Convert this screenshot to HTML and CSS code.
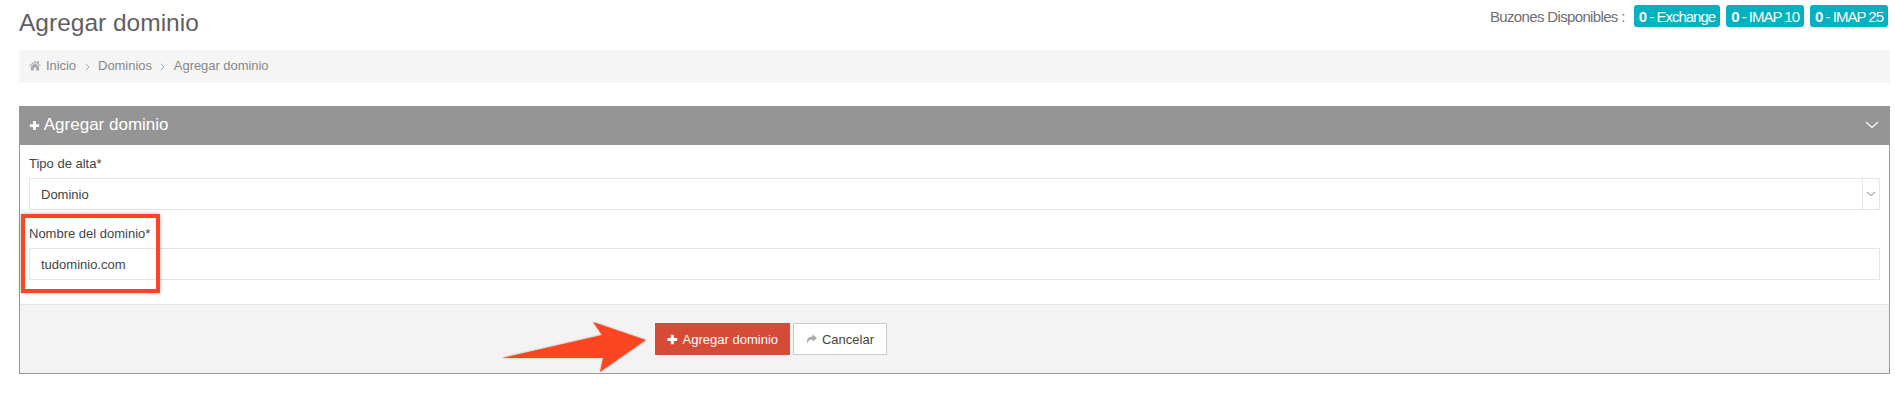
FILE: index.html
```html
<!DOCTYPE html>
<html lang="es">
<head>
<meta charset="utf-8">
<title>Agregar dominio</title>
<link rel="stylesheet" href="styles.css">
</head>
<body>
<div class="page">
  <header class="top">
    <h1 class="title">Agregar dominio</h1>
    <div class="quota">
      <span class="quota-label">Buzones Disponibles :</span>
      <span class="badge"><b>0</b> - Exchange</span>
      <span class="badge"><b>0</b> - IMAP 10</span>
      <span class="badge"><b>0</b> - IMAP 25</span>
    </div>
  </header>
  <nav class="crumbs">
    <svg class="home" viewBox="0 0 16 14" width="12" height="11"><path d="M8 0.500 0.300 7l.9 1L8 2.400 14.800 8l.9-1-2.700-2.300V1h-2v2L8 .5zM8 3.600 2.500 8.200V13.500h4v-3.600h3v3.600h4V8.200L8 3.600z" fill="#aaa"/></svg>
    <a>Inicio</a><svg class="sep" viewBox="0 0 5 8" width="5" height="8"><path d="M.7 .7 4 4 .7 7.300" fill="none" stroke="#aaa" stroke-width="1"/></svg><a>Dominios</a><svg class="sep" viewBox="0 0 5 8" width="5" height="8"><path d="M.7 .7 4 4 .7 7.300" fill="none" stroke="#aaa" stroke-width="1"/></svg><a>Agregar dominio</a>
  </nav>
  <section class="panel">
    <div class="panel-head">
      <h2 class="panel-title"><svg class="plus" viewBox="0 0 12 12" width="11" height="11"><path d="M4.500 1h3v3.500h3.500v3h-3.500v3.500h-3v-3.500h-3.500v-3h3.500z" fill="#fff"/></svg> Agregar dominio</h2>
      <svg class="collapse" viewBox="0 0 14 8" width="14" height="8"><path d="M1 1l6 5.500 6-5.500" fill="none" stroke="#f1f1f1" stroke-width="1.500"/></svg>
    </div>
    <div class="panel-body">
      <div class="field">
        <label class="label">Tipo de alta*</label>
        <div class="select">
          <span class="value">Dominio</span>
          <span class="select-arrow"><svg viewBox="0 0 10 6" width="10" height="6"><path d="M1 1l4 3.500 4-3.500" fill="none" stroke="#888" stroke-width="1"/></svg></span>
        </div>
      </div>
      <div class="field">
        <label class="label">Nombre del dominio*</label>
        <div class="input"><span class="value">tudominio.com</span></div>
      </div>
    </div>
    <div class="panel-foot">
      <button class="btn btn-red"><svg viewBox="0 0 12 12" width="11" height="11"><path d="M4.300 .5h3.400v3.800h3.800v3.400h-3.800v3.800h-3.400v-3.800h-3.800v-3.400h3.800z" fill="#fff"/></svg> Agregar dominio</button>
      <button class="btn btn-white"><svg viewBox="0 0 14 12" width="14" height="12"><path d="M8.500 0 14 4.700 8.500 9.500V6.700C4.800 6.700 3 7.800 2 12 .2 6.500 2.500 2.900 8.500 2.700z" fill="#aaa"/></svg> Cancelar</button>
    </div>
  </section>
</div>
<div class="mark-box"></div>
<svg class="mark-arrow" viewBox="0 0 160 60" width="160" height="60"><path d="M2 38 102 15 93 2 146 20 100 52 103 38z" fill="#fc4521"/></svg>
</body>
</html>
```
FILE: styles.css
```css
* { box-sizing: border-box; }
html, body { margin: 0; padding: 0; background: #fff; }
body { font-family: "Liberation Sans", Arial, sans-serif; color: #333; position: relative; height: 406px; overflow: hidden; }
.page { padding: 0 5px 0 19px; }
.top { display: flex; justify-content: space-between; align-items: flex-start; height: 50px; }
.title { margin: 7px 0 0; font-size: 24.5px; line-height: 31px; font-weight: 400; color: #5f5f5f; }
.quota { display: flex; align-items: center; margin-top: 5px; height: 22px; padding-right: 2px; }
.quota-label { font-size: 15px; letter-spacing: -.65px; color: #6f6f6f; margin-right: 3px; }
.badge { background: #00b1c1; color: #fff; font-size: 15px; letter-spacing: -1px; height: 22px; line-height: 23px; padding: 0 5px; border-radius: 3px; margin-left: 6px; white-space: nowrap; }
.badge:first-of-type { margin-left: 0; }
.crumbs { display: flex; align-items: center; height: 33px; padding-bottom: 2px; background: #f5f5f5; padding-left: 10px; font-size: 13px; letter-spacing: -.05px; color: #888; }
.crumbs a { color: #888; }
.home { margin-right: 5px; }
.sep { margin: 2px 8.500px 0; }
.panel { margin-top: 23px; border: solid #999; border-width: 0 1px 1px 1px; height: 268px; display: flex; flex-direction: column; }
.panel-head { display: flex; justify-content: space-between; align-items: center; height: 39px; margin: 0 -1px; background: #959595; padding: 0 11px 2px 10px; }
.panel-title { margin: 0; font-size: 17px; font-weight: 400; color: #fff; }
.plus { vertical-align: -1px; }
.panel-body { flex: 1; padding: 9px 9px 0; }
.field + .field { margin-top: 14px; }
.label { display: block; font-size: 13px; line-height: 19px; margin-bottom: 5px; color: #444; }
.select, .input { display: flex; align-items: center; border: 1px solid #e5e5e5; height: 32px; background: #fff; }
.value { flex: 1; font-size: 13px; padding-left: 11px; color: #444; }
.select-arrow { width: 17px; height: 100%; border-left: 1px solid #e5e5e5; display: flex; align-items: center; justify-content: center; }
.panel-foot { height: 69px; flex: none; background: #f3f3f3; border-top: 1px solid #e5e5e5; padding: 18px 0 0 635px; display: flex; align-items: flex-start; gap: 3px; }
.btn { height: 32px; font-family: "Liberation Sans", Arial, sans-serif; font-size: 13px; border-radius: 0; display: inline-flex; align-items: center; gap: 5px; padding: 0 12px; white-space: nowrap; }
.btn-red { background: #d64a38; border: 0; color: #fff; width: 135px; }
.btn-white { background: #fff; border: 1px solid #ccc; color: #444; width: 94px; }
.mark-box { position: absolute; left: 21px; top: 214px; width: 139px; height: 79px; border: 4px solid #fc4521; box-shadow: 0 0 4px rgba(0,0,0,.3); }
.mark-arrow { position: absolute; left: 500px; top: 320px; filter: drop-shadow(0 0 1px rgba(0,0,0,.3)); }
```
